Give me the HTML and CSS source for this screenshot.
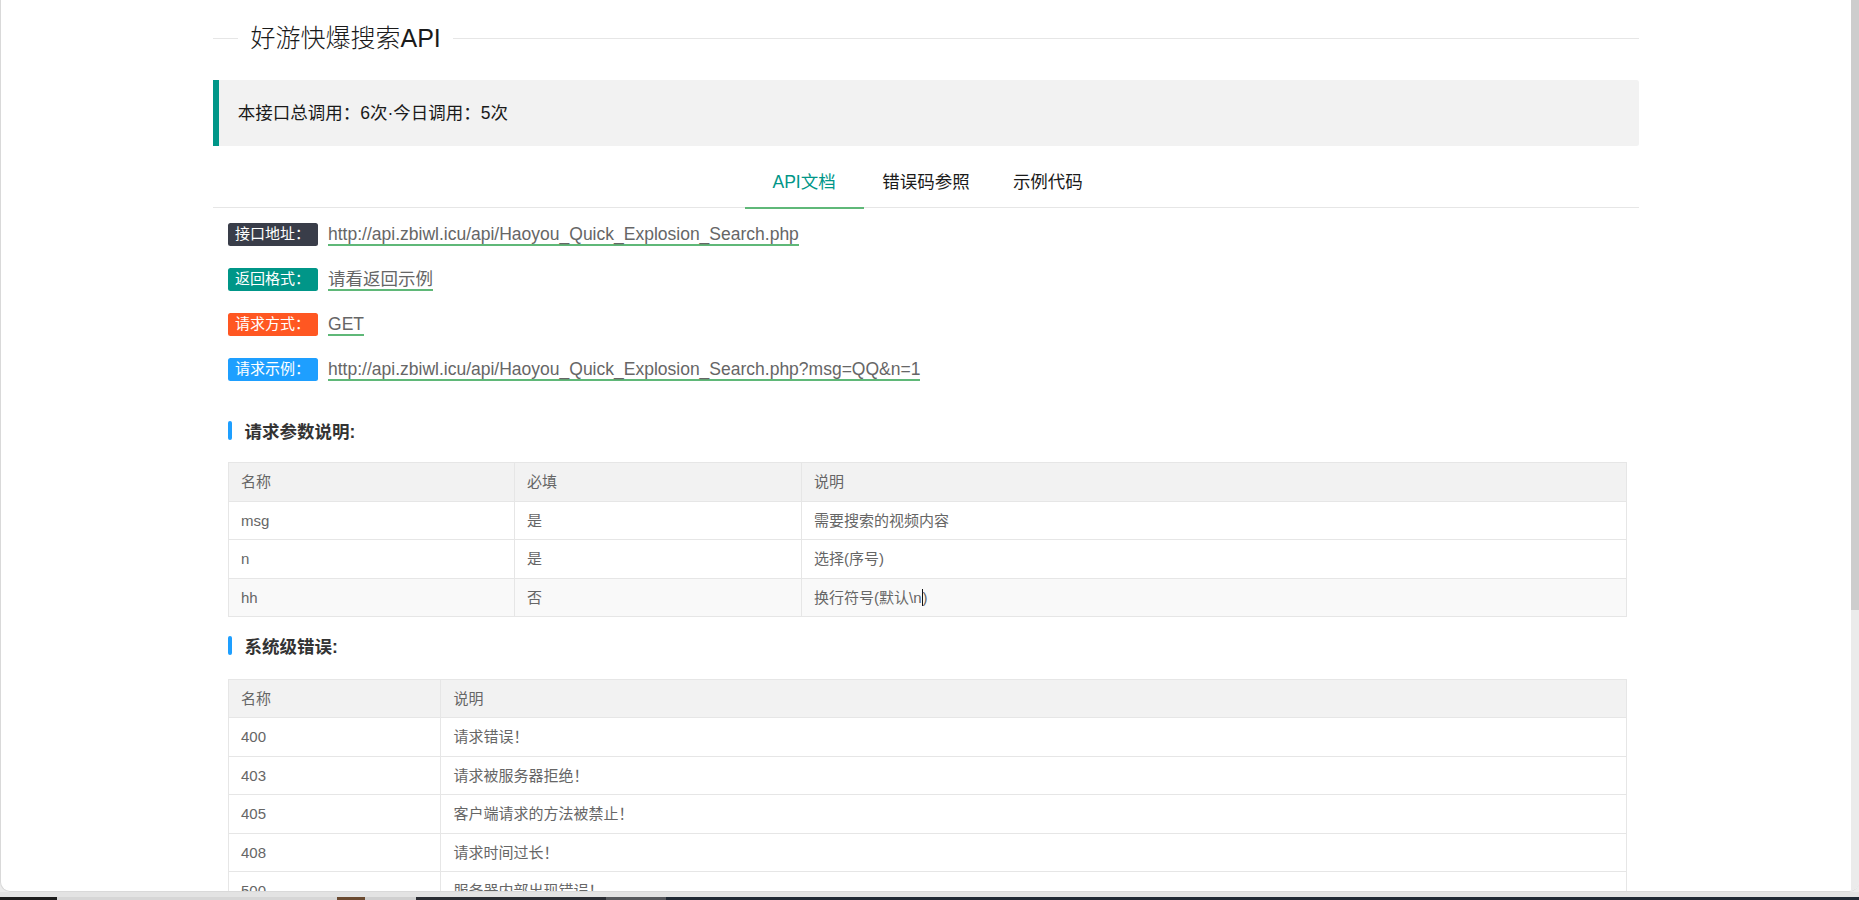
FILE: index.html
```html
<!DOCTYPE html>
<html lang="zh-CN">
<head>
<meta charset="utf-8">
<title>好游快爆搜索API</title>
<link rel="stylesheet" href="styles.css">
</head>
<body>
<div class="desktop">
  <div class="window">
    <div class="page">
      <div class="container">
        <div class="field-title">
          <span class="ft-line ft-line-left"></span>
          <span class="ft-text">好游快爆搜索API</span>
          <span class="ft-line ft-line-right"></span>
        </div>
        <blockquote class="quote">本接口总调用：6次·今日调用：5次</blockquote>
        <ul class="tabs">
          <li class="tab active">API文档</li>
          <li class="tab">错误码参照</li>
          <li class="tab">示例代码</li>
        </ul>
        <div class="content">
          <div class="info-row"><span class="badge badge-black">接口地址：</span><span class="link">http://api.zbiwl.icu/api/Haoyou_Quick_Explosion_Search.php</span></div>
          <div class="info-row"><span class="badge badge-green">返回格式：</span><span class="link">请看返回示例</span></div>
          <div class="info-row"><span class="badge badge-orange">请求方式：</span><span class="link">GET</span></div>
          <div class="info-row"><span class="badge badge-blue">请求示例：</span><span class="link">http://api.zbiwl.icu/api/Haoyou_Quick_Explosion_Search.php?msg=QQ&amp;n=1</span></div>

          <h3 class="sec-title sec-first">请求参数说明:</h3>
          <table class="tbl">
            <colgroup>
              <col class="w-p1"><col class="w-p2"><col>
            </colgroup>
            <thead>
              <tr><th>名称</th><th>必填</th><th>说明</th></tr>
            </thead>
            <tbody>
              <tr><td>msg</td><td>是</td><td>需要搜索的视频内容</td></tr>
              <tr><td>n</td><td>是</td><td>选择(序号)</td></tr>
              <tr class="hover"><td>hh</td><td>否</td><td>换行符号(默认\n<span class="caret"></span>)</td></tr>
            </tbody>
          </table>

          <h3 class="sec-title sec-second">系统级错误:</h3>
          <table class="tbl">
            <colgroup>
              <col class="w-e1"><col>
            </colgroup>
            <thead>
              <tr><th>名称</th><th>说明</th></tr>
            </thead>
            <tbody>
              <tr><td>400</td><td>请求错误！</td></tr>
              <tr><td>403</td><td>请求被服务器拒绝！</td></tr>
              <tr><td>405</td><td>客户端请求的方法被禁止！</td></tr>
              <tr><td>408</td><td>请求时间过长！</td></tr>
              <tr><td>500</td><td>服务器内部出现错误！</td></tr>
            </tbody>
          </table>
        </div>
      </div>
    </div>
    <div class="scrollbar"><div class="thumb"></div></div>
  </div>
  <div class="shadow-band"></div>
  <div class="taskbar">
    <span class="tb tb-a"></span>
    <span class="tb tb-b"></span>
    <span class="tb tb-c"></span>
    <span class="tb tb-d"></span>
    <span class="tb tb-e"></span>
    <span class="tb tb-f"></span>
    <span class="tb tb-g"></span>
  </div>
</div>
</body>
</html>
```

FILE: styles.css
```css
* { box-sizing: border-box; }
html, body { margin: 0; padding: 0; }
body {
  width: 1859px;
  height: 900px;
  overflow: hidden;
  background: #ececec;
  font-family: "Liberation Sans", Arial, "Noto Sans CJK SC", sans-serif;
}
.desktop { height: 900px; display: flex; flex-direction: column; }

.window {
  height: 892px;
  flex: none;
  display: flex;
  background: #fff;
  border-left: 1px solid #d9d9d9;
  border-bottom: 1px solid #d9d9d9;
  border-radius: 0 0 10px 10px;
  overflow: hidden;
}
.page { flex: 1; overflow: hidden; }
.scrollbar { width: 8px; flex: none; background: #ebebeb; }
.thumb { height: 610px; background: #cdcdcd; }

.shadow-band { height: 5px; flex: none; background: #e3e3e3; }
.taskbar { height: 3px; flex: none; display: flex; background: #1f2630; }
.tb { height: 3px; display: block; }
.tb-a { width: 57px; background: #1b1b1b; }
.tb-b { width: 280px; background: #d6d6d6; }
.tb-c { width: 28px; background: #6a4a30; }
.tb-d { width: 51px; background: #cfcfcf; }
.tb-e { width: 190px; background: #2a2d33; }
.tb-f { width: 60px; background: #56585c; }
.tb-g { flex: 1; background: #1f2833; }

.container { width: 1426px; margin: 0 auto; }

/* title */
.field-title {
  margin-top: 23px;
  height: 30px;
  display: flex;
  align-items: center;
}
.ft-line { height: 1px; background: #e6e6e6; }
.ft-line-left { width: 25px; flex: none; }
.ft-line-right { flex: 1; }
.ft-text {
  padding: 0 12.5px;
  font-size: 25px;
  line-height: 30px;
  color: #1a1a1a;
  font-weight: 300;
}

/* quote */
.quote {
  margin: 27px 0 12.5px;
  padding: 18.75px;
  border-left: 6.25px solid #009688;
  border-radius: 0 2.5px 2.5px 0;
  background: #f2f2f2;
  font-size: 17.5px;
  line-height: 28px;
  color: #1a1a1a;
}

/* tabs */
.tabs {
  list-style: none;
  margin: 0;
  padding: 0;
  height: 50px;
  border-bottom: 1px solid #e6e6e6;
  display: flex;
  justify-content: center;
}
.tab {
  position: relative;
  min-width: 118.75px;
  padding: 0 18.75px;
  text-align: center;
  font-size: 17.5px;
  line-height: 49px;
  color: #1a1a1a;
}
.tab.active { color: #009688; }
.tab.active::after {
  content: "";
  position: absolute;
  left: 0;
  right: 0;
  bottom: -1.5px;
  border-bottom: 2.5px solid #5fb878;
}

/* content */
.content { padding: 4px 12.5px 0 14.5px; }
.info-row {
  height: 45px;
  display: flex;
  align-items: center;
  gap: 10.5px;
}
.badge {
  display: inline-block;
  height: 22.5px;
  line-height: 22.5px;
  padding: 0 7.5px;
  font-size: 15px;
  color: #fff;
  border-radius: 2.5px;
}
.badge-black { background: #393d49; }
.badge-green { background: #009688; }
.badge-orange { background: #ff5722; }
.badge-blue { background: #1e9fff; }
.link {
  display: inline-block;
  font-size: 17.5px;
  line-height: 20px;
  color: #666;
  border-bottom: 2px solid #5fb878;
}

.sec-title {
  margin: 0;
  height: 19px;
  display: flex;
  align-items: center;
  font-size: 17.5px;
  font-weight: bold;
  color: #333;
}
.sec-title::before {
  content: "";
  width: 4.5px;
  height: 19px;
  border-radius: 2px;
  background: #1e9fff;
  margin-right: 12.5px;
}
.sec-first { margin-top: 28.7px; }
.sec-second { margin-top: 19px; }

.tbl {
  width: 100%;
  table-layout: fixed;
  border-collapse: collapse;
  font-size: 15px;
  color: #666;
  margin-top: 22.5px;
}
.sec-second + .tbl { margin-top: 23.5px; }
.tbl th, .tbl td {
  border: 1px solid #e6e6e6;
  padding: 6.25px 12.5px;
  line-height: 25px;
  text-align: left;
  font-weight: normal;
}
.tbl th { background: #f2f2f2; }
.tbl tr.hover td { background: #f9f9f9; }
.w-p1 { width: 286px; }
.w-p2 { width: 287px; }
.w-e1 { width: 212.5px; }
.caret {
  display: inline-block;
  width: 1px;
  height: 17px;
  background: #111;
  vertical-align: -3px;
}
```
